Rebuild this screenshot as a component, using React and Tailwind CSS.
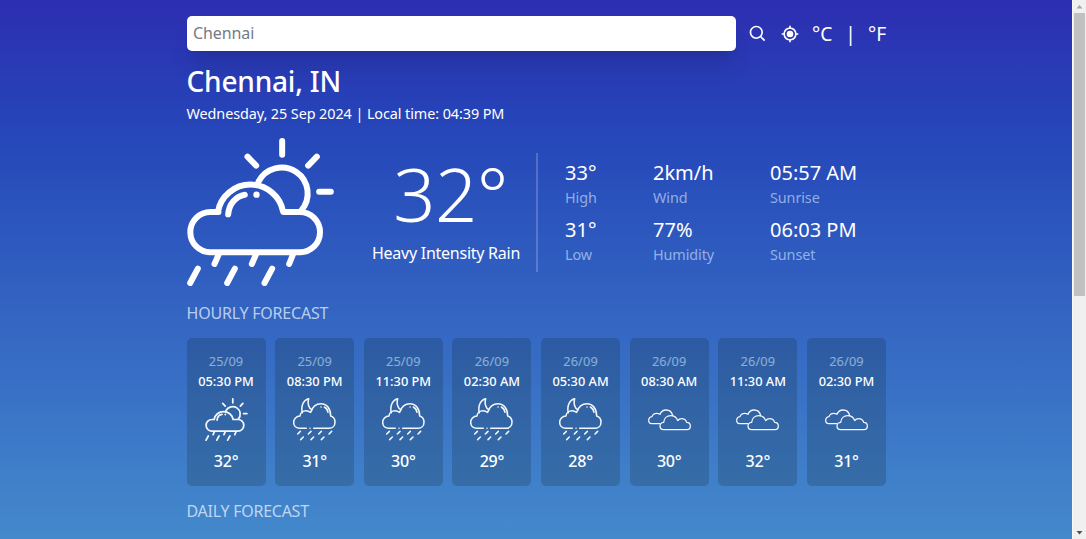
import React from "react";
import { BiSearch, BiCurrentLocation } from "react-icons/bi";

function SunRain({ className }) {
  return (
    <svg viewBox="32 24 440 444" className={className} fill="none" stroke="currentColor" strokeWidth="18" strokeLinecap="round" strokeLinejoin="round">
      <path d="M126 246H102A60.5 60.5 0 0 0 102 367H370A60.5 60.5 0 0 0 370 246H320A99.5 99.5 0 0 0 124 246Z" />
      <path d="M246 155A78 78 0 1 1 374 242" />
      <path d="M317 33V74M213 80L239 107M421 80L395 107M428 185H463" />
      <path d="M155 253C157 223 178 198 205 194" />
      <path d="M127 372L114 402M239 372L226 402M350 372L338 402M64 416L41 459M175 416L152 459M287 416L264 459" />
      <circle cx="240" cy="194" r="9.5" fill="currentColor" stroke="none" />
    </svg>
  );
}

function MoonRain({ className }) {
  return (
    <svg viewBox="340 310 129 129" className={className} fill="none" stroke="currentColor" strokeWidth="4.6" strokeLinecap="round" strokeLinejoin="round">
      <path d="M380 401H361C348 401 342 392 342 383C342 373 350 364 361 364C362 354 370 348 379 348C385 348 389 350 393 353C398 337 410 327 424 327C441 327 453 341 453 364C461 366 466 374 466 383C466 393 459 401 448 401H402" />
      <path d="M368 354C363 335 371 316 387 312C383 326 387 341 397 345" />
      <path d="M434 337C440 340 444 346 445 353" />
      <path d="M362 410L354 418M394 410L386 418M425 410L417 418M456 410L448 418M371 427L363 435M402 427L394 435M433 427L425 435" />
      <path d="M391 401H391.1M424 337H424.1" />
    </svg>
  );
}

function Clouds({ className }) {
  return (
    <svg viewBox="84 203 129 129" className={className} fill="none" stroke="currentColor" strokeWidth="3.8" strokeLinecap="round" strokeLinejoin="round">
      <path d="M131 298C124 298 120 293 120 287C120 281 125 276 131 276C132 264 141 256 152 256C163 256 170 262 173 271C176 267 180 265 185 265C193 265 198 270 200 276C207 276 211 281 211 287C211 293 207 298 201 298Z" />
      <path d="M120 280H95C89 280 86 275 86 270C86 263 90 260 96 259C98 252 104 249 110 249C114 249 117 250 120 252C123 244 129 239 138 239C148 239 156 246 158 256" />
    </svg>
  );
}

const icons = { sun: SunRain, moon: MoonRain, clouds: Clouds };

const hours = [
  ["25/09", "05:30 PM", "sun", "32°"],
  ["25/09", "08:30 PM", "moon", "31°"],
  ["25/09", "11:30 PM", "moon", "30°"],
  ["26/09", "02:30 AM", "moon", "29°"],
  ["26/09", "05:30 AM", "moon", "28°"],
  ["26/09", "08:30 AM", "clouds", "30°"],
  ["26/09", "11:30 AM", "clouds", "32°"],
  ["26/09", "02:30 PM", "clouds", "31°"],
];

function Stat({ value, label }) {
  return (
    <div className="h-[56.5px]">
      <p className="text-[20px] leading-[28px]">{value}</p>
      <p className="text-[14.4px] leading-[22px] tracking-[-0.1px] text-[#d8ecff]/60">{label}</p>
    </div>
  );
}

export default function App() {
  return (
    <div className="flex h-[539px] w-full overflow-hidden bg-[#f0f0f0] font-['Noto_Sans','Open_Sans',sans-serif]">
      <main className="flex h-full w-[1072px] shrink-0 justify-center bg-[linear-gradient(#2d2eb1,#2547b9_25%,#3262c1_55%,#4489cc)] text-white">
        <div className="w-[700px] pt-4 pl-[0.5px]">
          <div className="flex items-center">
            <input placeholder="Chennai" className="h-[35px] w-[549.5px] shrink-0 rounded-[5px] bg-white px-[6.5px] pb-[2px] text-[16px] tracking-[-0.1px] text-gray-700 shadow-xl outline-none placeholder:text-[#757b85]" />
            <BiSearch className="ml-3 size-[20px] shrink-0" />
            <BiCurrentLocation className="ml-3 size-[20px] shrink-0" />
            <div className="ml-3 flex text-[19.2px] leading-[28px]">
              <span>°C</span>
              <span className="mr-[12px] ml-[13px]">|</span>
              <span>°F</span>
            </div>
          </div>

          <h1 className="mt-[11px] text-[28px] leading-[38px] font-[550] tracking-[-0.2px]">Chennai, IN</h1>
          <p className="mt-[4px] text-[14.4px] leading-[20px] tracking-[-0.08px]">Wednesday, 25 Sep 2024 | Local time: 04:39 PM</p>

          <section className="mt-[14px] flex h-[148px]">
            <SunRain className="h-[148px] w-[147px] shrink-0" />
            <div className="ml-[30px] flex w-[172px] shrink-0 flex-col items-center pt-[18px]">
              <p className="pl-[2px] text-[74px] leading-[76px] font-light tracking-[-0.5px]">32°</p>
              <p className="mt-[10px] -ml-[7px] text-[16px] leading-[22px] tracking-[-0.25px] whitespace-nowrap">Heavy Intensity Rain</p>
            </div>
            <div className="mt-[15px] h-[119px] w-[2px] shrink-0 bg-white/20" />
            <div className="mt-[21px] ml-[27.5px] grid grid-cols-[88px_117px_100px] content-start">
              <Stat value="33°" label="High" />
              <Stat value="2km/h" label="Wind" />
              <Stat value="05:57 AM" label="Sunrise" />
              <Stat value="31°" label="Low" />
              <Stat value="77%" label="Humidity" />
              <Stat value="06:03 PM" label="Sunset" />
            </div>
          </section>

          <h2 className="mt-[16px] text-[16px] leading-[22px] tracking-[-0.2px] text-[#e6f2ff]/75">HOURLY FORECAST</h2>
          <div className="mt-[14px] grid grid-cols-8 gap-[9.6px]">
            {hours.map(([date, time, icon, temp]) => {
              const Icon = icons[icon];
              return (
                <div key={date + time} className="flex h-[148px] flex-col items-center rounded-[5px] bg-[#102424]/20 pt-[12.5px]">
                  <p className="text-[12.8px] leading-[20px] tracking-[0.1px] text-[#d8f0ff]/55">{date}</p>
                  <p className="text-[12.8px] leading-[20px] font-medium">{time}</p>
                  <Icon className="mt-[7px] size-[43px] opacity-95" />
                  <p className="mt-[9px] text-[16px] leading-[22px] font-medium tracking-[-0.2px]">{temp}</p>
                </div>
              );
            })}
          </div>
          <h2 className="mt-[14px] text-[16px] leading-[22px] tracking-[-0.25px] text-[#e6f2ff]/75">DAILY FORECAST</h2>
        </div>
      </main>
      <div className="flex h-full w-[14px] flex-col items-center border-l border-[#fafafa] bg-[#f0f0f0]">
        <svg className="h-[13px] w-[7px] shrink-0" viewBox="0 0 7 13"><path d="M0.5 8.5L3.5 5L6.5 8.5Z" fill="#a3a3a3" /></svg>
        <div className="h-[283px] w-[11px] bg-[#c1c1c1]" />
        <div className="flex-1" />
        <svg className="h-[13px] w-[7px] shrink-0" viewBox="0 0 7 13"><path d="M0.5 5L3.5 8.5L6.5 5Z" fill="#505050" /></svg>
      </div>
    </div>
  );
}
